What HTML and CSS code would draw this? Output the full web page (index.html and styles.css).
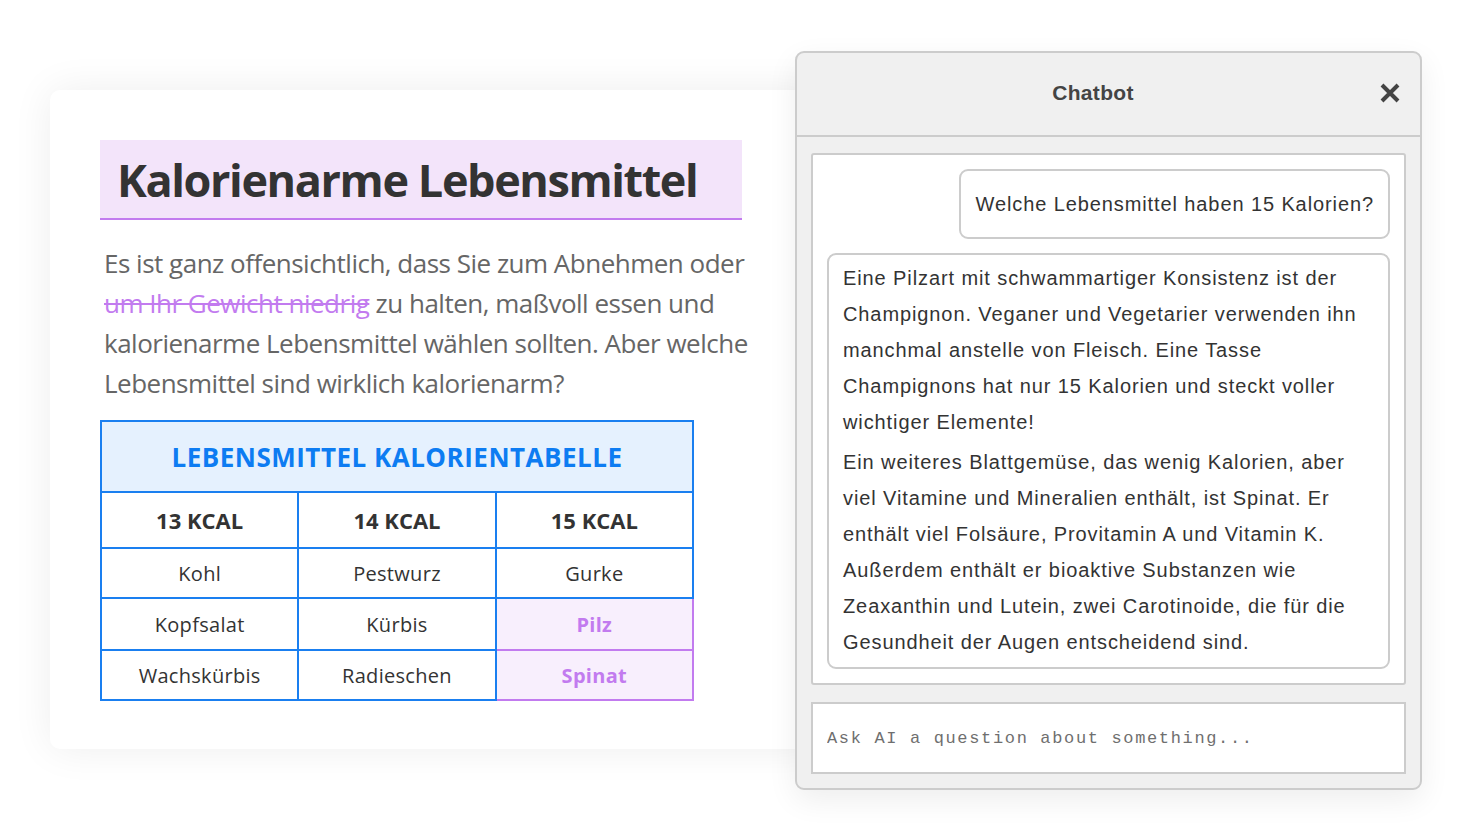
FILE: index.html
```html
<!DOCTYPE html>
<html lang="de">
<head>
<meta charset="utf-8">
<title>Kalorienarme Lebensmittel</title>
<link rel="stylesheet" href="styles.css">
</head>
<body>
<div class="stage">
  <article class="card">
    <h1 class="title">Kalorienarme Lebensmittel</h1>
    <p class="intro">Es ist ganz offensichtlich, dass Sie zum Abnehmen oder <s class="strike">um Ihr Gewicht niedrig</s> zu halten, maßvoll essen und kalorienarme Lebensmittel wählen sollten. Aber welche Lebensmittel sind wirklich kalorienarm?</p>
    <table class="kcal">
      <thead>
        <tr class="caption-row"><th colspan="3">LEBENSMITTEL KALORIENTABELLE</th></tr>
        <tr class="head-row"><th>13 KCAL</th><th>14 KCAL</th><th>15 KCAL</th></tr>
      </thead>
      <tbody>
        <tr class="r1"><td>Kohl</td><td>Pestwurz</td><td>Gurke</td></tr>
        <tr class="r2"><td>Kopfsalat</td><td>Kürbis</td><td class="hl">Pilz</td></tr>
        <tr class="r3"><td>Wachskürbis</td><td>Radieschen</td><td class="hl">Spinat</td></tr>
      </tbody>
    </table>
  </article>

  <section class="chatbot">
    <header class="chat-head">
      <span class="chat-title">Chatbot</span>
      <button class="close" aria-label="Schließen">
        <svg width="22" height="22" viewBox="0 0 22 22"><path d="M3 3 L19 19 M19 3 L3 19" stroke="#444" stroke-width="4" stroke-linecap="butt"/></svg>
      </button>
    </header>
    <div class="chat-body">
      <div class="messages">
        <div class="msg user">Welche Lebensmittel haben 15 Kalorien?</div>
        <div class="msg bot">
          <p>Eine Pilzart mit schwammartiger Konsistenz ist der Champignon. Veganer und Vegetarier verwenden ihn manchmal anstelle von Fleisch. Eine Tasse Champignons hat nur 15 Kalorien und steckt voller wichtiger Elemente!</p>
          <p>Ein weiteres Blattgemüse, das wenig Kalorien, aber viel Vitamine und Mineralien enthält, ist Spinat. Er enthält viel Folsäure, Provitamin A und Vitamin K. Außerdem enthält er bioaktive Substanzen wie Zeaxanthin und Lutein, zwei Carotinoide, die für die Gesundheit der Augen entscheidend sind.</p>
        </div>
      </div>
      <input class="ask" type="text" placeholder="Ask AI a question about something...">
    </div>
  </section>
</div>
</body>
</html>
```

FILE: styles.css
```css
* { box-sizing: border-box; }
html, body { margin: 0; padding: 0; background: #fff; }
body { width: 1472px; height: 840px; overflow: hidden; }

.stage {
  position: relative;
  width: 1472px;
  height: 840px;
  padding: 90px 0 0 50px;
}

.card {
  width: 770px;
  height: 659px;
  background: #fff;
  border-radius: 10px;
  box-shadow: 0 0 40px rgba(0, 0, 0, 0.07);
  padding: 50px 0 0 50px;
  font-family: "Open Sans", sans-serif;
}

.title {
  margin: 0;
  width: 642px;
  height: 80px;
  background: #f3e4fa;
  border-bottom: 2px solid #c27bef;
  padding: 10px 0 0 17px;
  font-size: 45px;
  font-weight: 700;
  line-height: 60px;
  letter-spacing: -1.4px;
  color: #333;
}

.intro {
  margin: 23px 0 0 4px;
  width: 655px;
  font-size: 26px;
  line-height: 40px;
  color: #666;
  letter-spacing: -0.5px;
}
.strike {
  color: #c27bef;
  text-decoration: line-through;
  text-decoration-thickness: 2px;
}

.kcal {
  margin-top: 17px;
  width: 594px;
  border-collapse: collapse;
  table-layout: fixed;
  color: #333;
  text-align: center;
}
.kcal th, .kcal td {
  border: 2px solid #1a7ff0;
  padding: 0;
}
.caption-row th {
  height: 71px;
  background: #e5f1fe;
  color: #0d7cf2;
  font-size: 26px;
  font-weight: 700;
  letter-spacing: 0.5px;
}
.head-row th {
  height: 56px;
  font-size: 22px;
  font-weight: 700;
}
.kcal td { font-size: 20px; letter-spacing: 0.3px; }
.r1 td { height: 50px; }
.r2 td { height: 52px; }
.r3 td { height: 50px; }
.kcal td.hl {
  background: #f8effd;
  border-color: #c27bef;
  color: #c27bef;
  font-weight: 700;
}

.chatbot {
  position: absolute;
  left: 795px;
  top: 51px;
  width: 627px;
  height: 739px;
  background: #f0f0f0;
  border: 2px solid #cccccc;
  border-radius: 9px;
  box-shadow: 0 10px 30px rgba(0, 0, 0, 0.07);
  font-family: "Liberation Sans", Arial, sans-serif;
  display: flex;
  flex-direction: column;
}

.chat-head {
  height: 86px;
  border-bottom: 2px solid #cccccc;
  display: flex;
  align-items: center;
  padding: 0 19px 0 10px;
}
.chat-title {
  flex: 1;
  text-align: center;
  font-size: 21px;
  font-weight: 700;
  color: #444;
  letter-spacing: 0.3px;
  margin-top: -2px;
}
.close {
  width: 22px;
  height: 22px;
  padding: 0;
  border: 0;
  background: transparent;
  display: flex;
  margin-top: -2px;
}

.chat-body {
  flex: 1;
  padding: 16px 14px 14px 14px;
  display: flex;
  flex-direction: column;
  gap: 17px;
}

.messages {
  height: 532px;
  background: #fff;
  border: 2px solid #cccccc;
  border-radius: 3px;
  padding: 14px 14px 15px 14px;
  display: flex;
  flex-direction: column;
  align-items: flex-end;
  gap: 14px;
}

.msg {
  border: 2px solid #cccccc;
  border-radius: 9px;
  background: #fff;
  color: #333;
  font-size: 20px;
  line-height: 36px;
  letter-spacing: 0.9px;
}
.msg.user {
  padding: 15px 14px 15px 14px;
}
.msg.bot {
  align-self: stretch;
  padding: 5px 14px 7px 14px;
}
.msg.bot p { margin: 0; }
.msg.bot p + p { margin-top: 4px; }

.ask {
  height: 72px;
  width: 100%;
  border: 2px solid #cccccc;
  border-radius: 0;
  background: #fff;
  padding: 0 14px;
  font-family: "Liberation Mono", "Courier New", monospace;
  font-size: 17px;
  letter-spacing: 1.65px;
  outline: none;
}
.ask::placeholder { color: #6f6f6f; }
```
